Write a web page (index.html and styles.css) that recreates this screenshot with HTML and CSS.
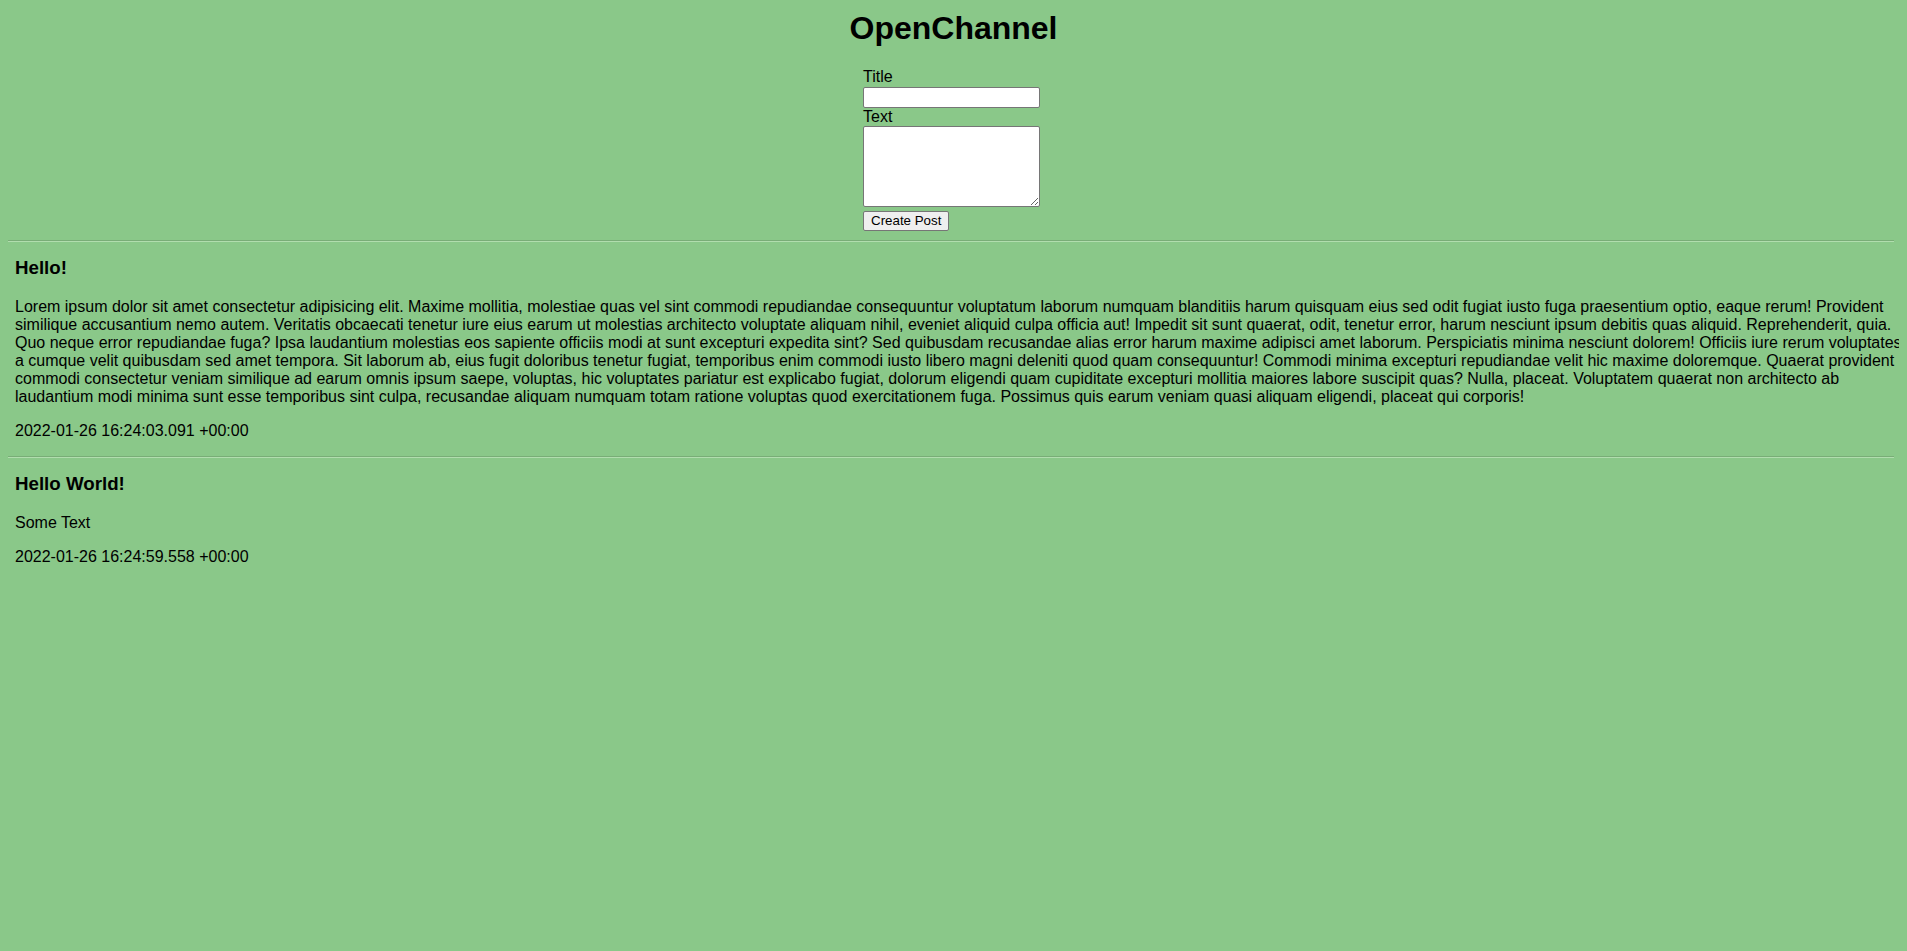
FILE: index.html
```html
<!DOCTYPE html>
<html lang="en">
<head>
<meta charset="utf-8">
<title>OpenChannel</title>
<link rel="stylesheet" href="styles.css">
</head>
<body>
<h1 class="site-title">OpenChannel</h1>
<form class="post-form">
  <label class="form-label" for="title">Title</label>
  <input class="form-input" id="title" type="text">
  <label class="form-label" for="text">Text</label>
  <textarea class="form-textarea" id="text"></textarea>
  <button class="form-button" type="button">Create Post</button>
</form>
<hr class="divider">
<div class="post">
  <h3 class="post-title">Hello!</h3>
  <p class="post-text">Lorem ipsum dolor sit amet consectetur adipisicing elit. Maxime mollitia, molestiae quas vel sint commodi repudiandae consequuntur voluptatum laborum numquam blanditiis harum quisquam eius sed odit fugiat iusto fuga praesentium optio, eaque rerum! Provident similique accusantium nemo autem. Veritatis obcaecati tenetur iure eius earum ut molestias architecto voluptate aliquam nihil, eveniet aliquid culpa officia aut! Impedit sit sunt quaerat, odit, tenetur error, harum nesciunt ipsum debitis quas aliquid. Reprehenderit, quia. Quo neque error repudiandae fuga? Ipsa laudantium molestias eos sapiente officiis modi at sunt excepturi expedita sint? Sed quibusdam recusandae alias error harum maxime adipisci amet laborum. Perspiciatis minima nesciunt dolorem! Officiis iure rerum voluptates a cumque velit quibusdam sed amet tempora. Sit laborum ab, eius fugit doloribus tenetur fugiat, temporibus enim commodi iusto libero magni deleniti quod quam consequuntur! Commodi minima excepturi repudiandae velit hic maxime doloremque. Quaerat provident commodi consectetur veniam similique ad earum omnis ipsum saepe, voluptas, hic voluptates pariatur est explicabo fugiat, dolorum eligendi quam cupiditate excepturi mollitia maiores labore suscipit quas? Nulla, placeat. Voluptatem quaerat non architecto ab laudantium modi minima sunt esse temporibus sint culpa, recusandae aliquam numquam totam ratione voluptas quod exercitationem fuga. Possimus quis earum veniam quasi aliquam eligendi, placeat qui corporis!</p>
  <p class="post-date">2022-01-26 16:24:03.091 +00:00</p>
</div>
<hr class="divider">
<div class="post">
  <h3 class="post-title">Hello World!</h3>
  <p class="post-text">Some Text</p>
  <p class="post-date">2022-01-26 16:24:59.558 +00:00</p>
</div>
</body>
</html>
```

FILE: styles.css
```css
html {
  background: #8ac889;
}

body {
  margin: 8px;
  background: #8ac889;
  color: #000;
  font-family: "Liberation Sans", Arial, sans-serif;
  font-size: 16px;
  line-height: 18px;
}

.site-title {
  margin: 2px 0 0;
  font-size: 32px;
  line-height: 37px;
  font-weight: bold;
  text-align: center;
}

.post-form {
  width: 181px;
  margin: 21px auto 0;
  display: flex;
  flex-direction: column;
  align-items: flex-start;
}

.form-label {
  display: block;
  line-height: 18px;
}

.form-input {
  box-sizing: border-box;
  width: 177px;
  height: 21px;
  margin: 1px 0 0;
  padding: 1px 2px;
  border: 1px solid #767676;
  border-radius: 2px;
  background: #fff;
  font-family: "Liberation Sans", Arial, sans-serif;
  font-size: 13.333px;
}

.form-textarea {
  box-sizing: border-box;
  width: 177px;
  height: 81px;
  margin: 0;
  padding: 2px;
  border: 1px solid #767676;
  border-radius: 2px;
  background: #fff;
  font-family: "Liberation Mono", monospace;
  font-size: 13.333px;
}

.form-button {
  box-sizing: border-box;
  height: 20px;
  margin: 4px 0 0;
  padding: 0 7px;
  border: 1px solid #767676;
  border-radius: 2px;
  background: #efefef;
  color: #000;
  font-family: "Liberation Sans", Arial, sans-serif;
  font-size: 13.333px;
  line-height: 16px;
}

.divider {
  margin: 9px 5px 0 0;
  height: 0;
  border: 0;
  border-top: 1px solid #79ad77;
  border-bottom: 1px solid #b1ddae;
}

.post {
  padding: 0 0 0 7px;
  margin-right: -7px;
}

.post + .divider {
  margin-top: 0;
}

.post-title {
  margin: 15px 0 19px;
  font-size: 18.72px;
  line-height: 22px;
  font-weight: bold;
}

.post-text {
  margin: 0 0 16px;
}

.post-date {
  margin: 0 0 16px;
}
```
